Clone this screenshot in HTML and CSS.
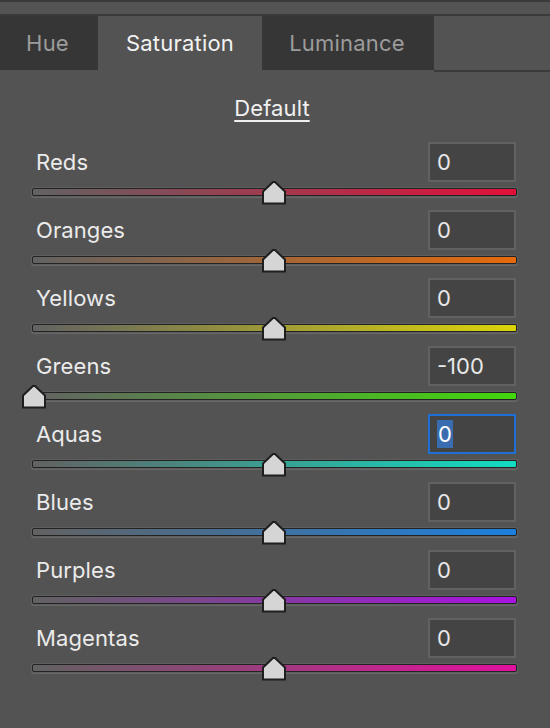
FILE: index.html
```html
<!DOCTYPE html>
<html>
<head>
<meta charset="utf-8">
<link rel="stylesheet" href="styles.css">
</head>
<body>
<div class="strip"></div>
<div class="tabs">
  <div class="tab tab-hue">Hue</div>
  <div class="tab tab-active tab-sat">Saturation</div>
  <div class="tab tab-lum">Luminance</div>
  <div class="tab-fill"></div>
</div>
<div class="default-wrap"><span class="default">Default</span></div>
<div class="rows">
  <div class="row">
    <div class="head"><span class="label">Reds</span><div class="field">0</div></div>
    <div class="slider"><div class="track reds"></div><div class="rail"><svg class="thumb" style="left:50%" viewBox="0 0 24 24" width="24" height="24"><polygon points="11,1 13,1 23,10.5 23,22.5 1,22.5 1,10.5" /></svg></div></div>
  </div>
  <div class="row">
    <div class="head"><span class="label">Oranges</span><div class="field">0</div></div>
    <div class="slider"><div class="track oranges"></div><div class="rail"><svg class="thumb" style="left:50%" viewBox="0 0 24 24" width="24" height="24"><polygon points="11,1 13,1 23,10.5 23,22.5 1,22.5 1,10.5" /></svg></div></div>
  </div>
  <div class="row">
    <div class="head"><span class="label">Yellows</span><div class="field">0</div></div>
    <div class="slider"><div class="track yellows"></div><div class="rail"><svg class="thumb" style="left:50%" viewBox="0 0 24 24" width="24" height="24"><polygon points="11,1 13,1 23,10.5 23,22.5 1,22.5 1,10.5" /></svg></div></div>
  </div>
  <div class="row">
    <div class="head"><span class="label">Greens</span><div class="field">-100</div></div>
    <div class="slider"><div class="track greens"></div><div class="rail"><svg class="thumb" style="left:0%" viewBox="0 0 24 24" width="24" height="24"><polygon points="11,1 13,1 23,10.5 23,22.5 1,22.5 1,10.5" /></svg></div></div>
  </div>
  <div class="row">
    <div class="head"><span class="label">Aquas</span><div class="field field-focus"><span class="sel">0</span></div></div>
    <div class="slider"><div class="track aquas"></div><div class="rail"><svg class="thumb" style="left:50%" viewBox="0 0 24 24" width="24" height="24"><polygon points="11,1 13,1 23,10.5 23,22.5 1,22.5 1,10.5" /></svg></div></div>
  </div>
  <div class="row">
    <div class="head"><span class="label">Blues</span><div class="field">0</div></div>
    <div class="slider"><div class="track blues"></div><div class="rail"><svg class="thumb" style="left:50%" viewBox="0 0 24 24" width="24" height="24"><polygon points="11,1 13,1 23,10.5 23,22.5 1,22.5 1,10.5" /></svg></div></div>
  </div>
  <div class="row">
    <div class="head"><span class="label">Purples</span><div class="field">0</div></div>
    <div class="slider"><div class="track purples"></div><div class="rail"><svg class="thumb" style="left:50%" viewBox="0 0 24 24" width="24" height="24"><polygon points="11,1 13,1 23,10.5 23,22.5 1,22.5 1,10.5" /></svg></div></div>
  </div>
  <div class="row">
    <div class="head"><span class="label">Magentas</span><div class="field">0</div></div>
    <div class="slider"><div class="track magentas"></div><div class="rail"><svg class="thumb" style="left:50%" viewBox="0 0 24 24" width="24" height="24"><polygon points="11,1 13,1 23,10.5 23,22.5 1,22.5 1,10.5" /></svg></div></div>
  </div>
</div>
</body>
</html>
```
FILE: styles.css
```css
html, body {
  margin: 0;
  padding: 0;
  background: #535353;
  height: 100%;
}
body {
  font-family: Inter, "Noto Sans", sans-serif;
  color: #e8e8e8;
  overflow: hidden;
}
.strip {
  height: 12px;
  border-top: 2px solid #3a3a3a;
  border-bottom: 2px solid #3a3a3a;
}
.tabs {
  display: flex;
  align-items: flex-start;
  height: 56px;
}
.tab {
  height: 54px;
  display: flex;
  align-items: center;
  justify-content: center;
  font-size: 22px;
  letter-spacing: 0.2px;
  color: #9c9c9c;
  background: #363636;
  box-sizing: border-box;
}
.tab-hue { width: 98px; padding-right: 3px; }
.tab-sat { width: 164px; }
.tab-lum { width: 172px; padding-right: 2px; }
.tab-active {
  background: #535353;
  color: #f2f2f2;
  height: 56px;
  padding-bottom: 2px;
}
.tab-fill {
  flex: 1;
  height: 54px;
  border-bottom: 2px solid #3a3a3a;
}
.default-wrap {
  display: flex;
  justify-content: center;
  padding-top: 24px;
  padding-right: 6px;
  height: 70px;
  box-sizing: border-box;
}
.default {
  font-size: 22px;
  letter-spacing: 0.1px;
  color: #f0f0f0;
  text-decoration: underline;
  text-underline-offset: 4px;
  text-decoration-thickness: 2px;
  line-height: 24px;
  height: 24px;
}
.rows {
  padding: 0 33px 0 32px;
}
.row {
  display: flex;
  flex-direction: column;
}
.head {
  display: flex;
  justify-content: space-between;
  align-items: center;
  height: 40px;
}
.label {
  font-size: 22px;
  letter-spacing: 0.1px;
  padding-left: 4px;
  color: #ebebeb;
}
.field {
  width: 88px;
  height: 40px;
  box-sizing: border-box;
  border: 2px solid #616161;
  background: #444444;
  font-size: 22px;
  color: #e8e8e8;
  display: flex;
  align-items: center;
  padding-left: 7px;
  margin-right: 1px;
}
.field-focus {
  border-color: #1f6fd6;
}
.sel {
  background: #3a6db0;
  color: #ffffff;
  display: inline-flex;
  align-items: center;
  height: 28px;
  padding: 0 1px;
}
.slider {
  position: relative;
  height: 28px;
}
.track {
  position: absolute;
  left: 0;
  right: 0;
  top: 6px;
  height: 8px;
  box-sizing: border-box;
  border: 1px solid #232323;
  border-radius: 2px;
  box-shadow: 0 0 0 1px #5e5e5e, 0 1px 1px 1px #6a6a6a;
}
.reds { background: linear-gradient(to right, #626262, #e2103a); }
.oranges { background: linear-gradient(to right, #626262, #e66a0c); }
.yellows { background: linear-gradient(to right, #626262, #dcd40a); }
.greens { background: linear-gradient(to right, #626262, #42d80c); }
.aquas { background: linear-gradient(to right, #626262, #12dcc2); }
.blues { background: linear-gradient(to right, #626262, #1c80de); }
.purples { background: linear-gradient(to right, #626262, #a912e2); }
.magentas { background: linear-gradient(to right, #626262, #e2109e); }
.rail {
  position: absolute;
  left: 2px;
  right: 3px;
  top: 0;
  height: 24px;
}
.thumb {
  position: absolute;
  top: -1px;
  transform: translateX(-50%);
  display: block;
}
.thumb polygon {
  fill: #d5d5d5;
  stroke: #1e1e1e;
  stroke-width: 2;
  stroke-linejoin: miter;
}
```
